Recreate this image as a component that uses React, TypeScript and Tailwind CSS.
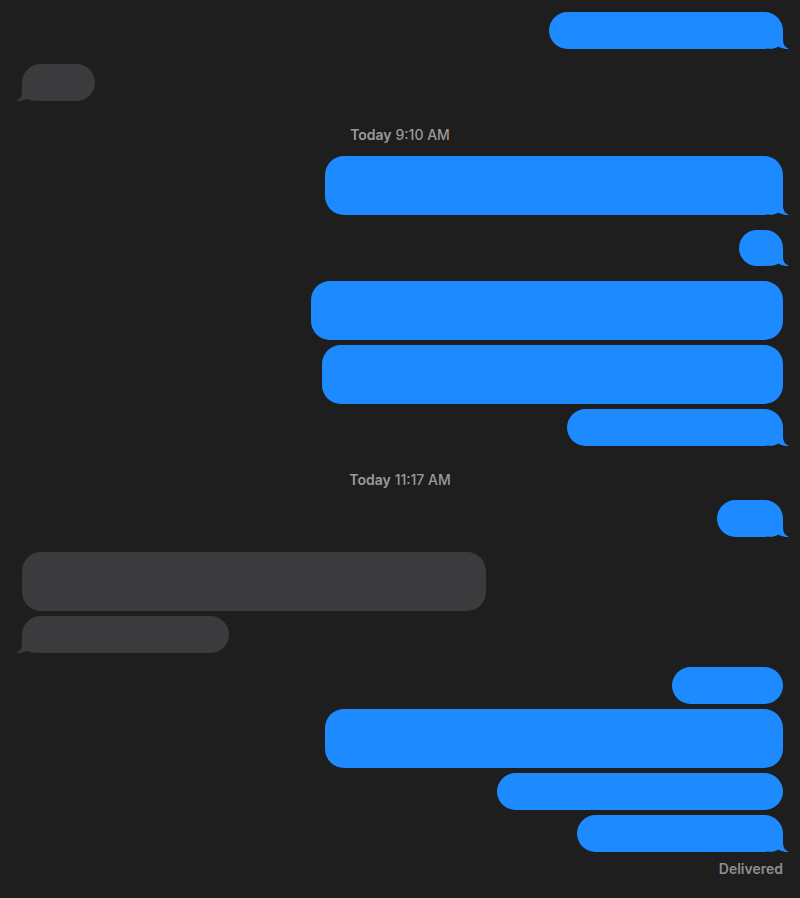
import React from 'react';

type Side = 'me' | 'them';

type Msg = {
    kind: 'msg';
    side: Side;
    cls: string; // width, height, top margin
    tail?: boolean;
};

type Stamp = { kind: 'stamp'; day: string; time: string; cls: string };

type Item = Msg | Stamp;

const items: Item[] = [
    { kind: 'msg', side: 'me', cls: 'w-[234px] h-[37px] mt-[12px]', tail: true },
    { kind: 'msg', side: 'them', cls: 'w-[73px] h-[37px] mt-[15px]', tail: true },
    { kind: 'stamp', day: 'Today', time: '9:10 AM', cls: 'pt-[26px] pb-[13px]' },
    { kind: 'msg', side: 'me', cls: 'w-[458px] h-[59px]', tail: true },
    { kind: 'msg', side: 'me', cls: 'w-[44px] h-[36px] mt-[15px]', tail: true },
    { kind: 'msg', side: 'me', cls: 'w-[472px] h-[59px] mt-[15px]' },
    { kind: 'msg', side: 'me', cls: 'w-[461px] h-[59px] mt-[5px]' },
    { kind: 'msg', side: 'me', cls: 'w-[216px] h-[37px] mt-[5px]', tail: true },
    { kind: 'stamp', day: 'Today', time: '11:17 AM', cls: 'pt-[26px] pb-[12px]' },
    { kind: 'msg', side: 'me', cls: 'w-[66px] h-[37px]', tail: true },
    { kind: 'msg', side: 'them', cls: 'w-[464px] h-[59px] mt-[15px]' },
    { kind: 'msg', side: 'them', cls: 'w-[207px] h-[37px] mt-[5px]', tail: true },
    { kind: 'msg', side: 'me', cls: 'w-[111px] h-[37px] mt-[14px]' },
    { kind: 'msg', side: 'me', cls: 'w-[458px] h-[59px] mt-[5px]' },
    { kind: 'msg', side: 'me', cls: 'w-[286px] h-[37px] mt-[5px]' },
    { kind: 'msg', side: 'me', cls: 'w-[206px] h-[37px] mt-[5px]', tail: true },
];

const Tail = ({ side }: { side: Side }) => (
    <svg
        width="20"
        height="18"
        viewBox="0 0 20 18"
        className={
            side === 'me'
                ? 'absolute bottom-0 right-[-6px] fill-[#1e8aff]'
                : 'absolute bottom-0 left-[-6px] -scale-x-100 fill-[#3b3b3d]'
        }
    >
        <path d="M0 0 H14 V9 C14 13.5 16 16.5 20 18 C16.5 18.4 12.5 17.6 9.5 15.6 C7 17.2 4 18 0 18 Z" />
    </svg>
);

const Bubble = ({ m }: { m: Msg }) => {
    const me = m.side === 'me';
    return (
        <div className={`flex ${me ? 'justify-end pr-[17px]' : 'justify-start pl-[22px]'}`}>
            <div
                className={`relative rounded-[19px] ${m.cls} ${me ? 'bg-[#1e8aff]' : 'bg-[#3b3b3d]'}`}
            >
                {m.tail && <Tail side={m.side} />}
            </div>
        </div>
    );
};

const App = () => {
    return (
        <div className="min-h-screen bg-[#1e1e1e] font-['Inter','Liberation_Sans',sans-serif]">
            <div className="flex flex-col">
                {items.map((it, i) =>
                    it.kind === 'stamp' ? (
                        <div key={i} className={`text-center text-[14px] leading-4 text-[#9a9a9a] ${it.cls}`}>
                            <span className="font-semibold">{it.day}</span>{' '}
                            <span className="font-medium">{it.time}</span>
                        </div>
                    ) : (
                        <Bubble key={i} m={it} />
                    )
                )}
                <div className="pr-[17px] pt-[9px] text-right text-[14px] leading-4 font-semibold text-[#8e8e8e]">
                    Delivered
                </div>
            </div>
        </div>
    );
};

export default App;
